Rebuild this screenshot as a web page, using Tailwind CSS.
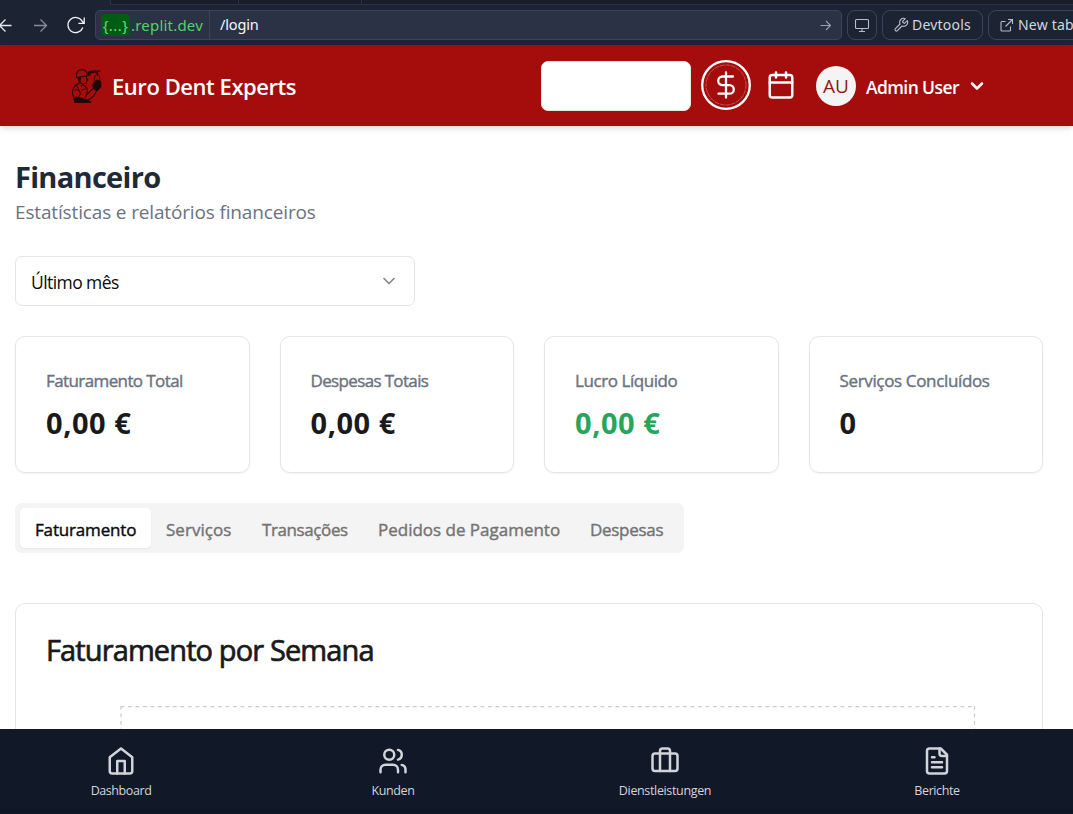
<!DOCTYPE html>
<html lang="pt">
<head>
<meta charset="utf-8">
<title>Euro Dent Experts</title>
<script src="https://cdn.jsdelivr.net/npm/@tailwindcss/browser@4"></script>
</head>
<body class="h-[814px] w-[1073px] overflow-hidden bg-white font-['Open_Sans','Noto_Sans',sans-serif]">
<div class="flex h-[814px] flex-col overflow-hidden">

  <!-- Browser toolbar -->
  <div class="flex h-[45px] shrink-0 flex-col bg-[#1c2333] font-['Noto_Sans',sans-serif]">
    <div class="ml-[110px] flex h-[5px] shrink-0 border-b border-l border-[#2b3245] bg-[#171d2b]">
      <div class="w-[128px] border-r border-[#2b3245]"></div>
      <div class="w-[123px] border-r border-[#2b3245]"></div>
    </div>
    <div class="mt-[5px] flex h-[30px] w-[1120px] items-center">
      <svg class="-ml-1 size-[18px]" viewBox="0 0 18 18" fill="none" stroke="#e5e8ee" stroke-width="1.3"><path d="M15.5 9.5H3M9.500 3.500 3.500 9.500l6 6"/></svg>
      <svg class="ml-[17px] size-[18px]" viewBox="0 0 18 18" fill="none" stroke="#878c99" stroke-width="1.300"><path d="M3 9.500h12.500M9.500 3.500l6 6-6 6"/></svg>
      <svg class="ml-[17px] size-[20px]" viewBox="0 0 20 20" fill="none" stroke="#f0f2f6" stroke-width="1.300"><path d="M16.800 12.500a7.600 7.600 0 1 1-.6-6.200L18 8.200M18.200 2.500v5.800h-5.800"/></svg>
      <div class="ml-[9px] flex h-[30px] w-[747px] items-center rounded-[5px] border border-[#3c445c] bg-[#2b3245]">
        <div class="ml-[5px] flex h-[22px] w-[29px] items-center justify-center rounded-[4px] bg-[#005c13] text-[15px] tracking-[0.400px] text-[#6cd97e]">{...}</div>
        <div class="ml-[1px] w-[78px] text-[15px] tracking-[0.200px] text-[#57d06c]">.replit.dev</div>
        <div class="h-[28px] w-px bg-[#3c445c]"></div>
        <div class="ml-[10px] grow text-[14.500px] tracking-[-0.150px] text-[#f5f9fc]">/login</div>
        <svg class="mr-[9px] size-[13px]" viewBox="0 0 13 13" fill="none" stroke="#9aa1b0" stroke-width="1.100"><path d="M1.500 6.500h10M7 2l4.500 4.500L7 11"/></svg>
      </div>
      <div class="ml-[5px] flex h-[30px] w-[30px] items-center justify-center rounded-[8px] border border-[#3c445c]">
        <svg class="size-[16px]" viewBox="0 0 16 16" fill="none" stroke="#b6bcc9" stroke-width="1.100"><rect x="1.500" y="2.500" width="13" height="9" rx="1"/><path d="M8 11.500v3M5 14.500h6"/></svg>
      </div>
      <div class="ml-[5px] flex h-[30px] w-[101px] items-center rounded-[8px] border border-[#3c445c]">
        <svg class="ml-[10px] size-[16px]" viewBox="0 0 24 24" fill="none" stroke="#b6bcc9" stroke-width="1.700" stroke-linejoin="round"><path d="M14.700 6.300a1 1 0 0 0 0 1.400l1.600 1.600a1 1 0 0 0 1.400 0l3.770-3.770a6 6 0 0 1-7.940 7.940l-6.910 6.910a2.120 2.120 0 0 1-3-3l6.910-6.910a6 6 0 0 1 7.940-7.940l-3.760 3.760z"/></svg>
        <span class="-mt-[2px] ml-[3px] text-[14px] tracking-[0.200px] text-[#d3d7df]">Devtools</span>
      </div>
      <div class="ml-[5px] flex h-[30px] w-[110px] items-center rounded-[8px] border border-[#3c445c]">
        <svg class="ml-[10px] size-[15px]" viewBox="0 0 15 15" fill="none" stroke="#b6bcc9" stroke-width="1.100"><path d="M6.500 3.500H3a1 1 0 0 0-1 1V12a1 1 0 0 0 1 1h7.500a1 1 0 0 0 1-1V8.500M9 1.500h4.500V6M13.500 1.500 6.500 8.500"/></svg>
        <span class="-mt-[2px] ml-[4px] whitespace-nowrap text-[14px] tracking-[0.200px] text-[#d3d7df]">New tab</span>
      </div>
    </div>
  </div>

  <!-- App header -->
  <header class="z-10 flex h-[81px] shrink-0 items-center bg-[#a50c0c] pl-[68px] shadow-md">
    <svg class="size-[36px]" viewBox="0 0 36 36" fill="none" stroke="#2a0707" stroke-width="1.100" stroke-linejoin="round" stroke-linecap="round">
      <path d="M8.500 9.500C7.500 5 10 2 13.500 1.800 17 1.700 19 3.500 19 6l3.500 1-3 .8L8.500 9.500"/>
      <path d="M11 9.500v4l2.500 2M18.500 8.500l.3 2.500 1 1-1 .7-.3 2.300-3 .7-2 2.300"/>
      <path d="M20.500 5l11-1.800M21.500 3.800l6-.6M28.500 4l1.200 2.500" stroke-width="1.800"/>
      <path d="M28.500 6.500c-3 2-2.500 5-1 8M30 6c2.500 3 2 6 1 8" stroke-width=".8"/>
      <path d="M11 15.500c-4 1.500-6.500 5-6.500 9.500L6 31M15 17c3 1 4.500 4 4.500 7l-2 5M19.500 26l6-6M18 32.500c5-1 9-5 11-11"/>
      <path d="M9 18l3.500 8-3 4M7 22c2-1 4 0 5 2M14 22l3-1" stroke-width=".9"/>
      <path d="M26 14.500l3-2.500 3.500 1.500.5 5-3.500 4-3.500-1.500-1.500-4z" fill="#1c0808"/>
      <path d="M5.500 29l6 .8 8 2.200 3.500 2.500H7z" fill="#1c0808"/>
      <path d="M10 10l2.500-.5-.5 4z" fill="#1c0808"/>
    </svg>
    <span class="mt-[2px] ml-[8px] w-[429px] whitespace-nowrap text-[22px] font-semibold tracking-[-0.450px] text-white">Euro Dent Experts</span>
    <div class="h-[50px] w-[150px] rounded-[7px] border border-[#e5e5e5] bg-white"></div>
    <svg class="-mt-[2px] ml-[10px] size-[50px]" viewBox="0 0 50 50" fill="none" stroke="#fff" stroke-linecap="round" stroke-linejoin="round">
      <circle cx="25" cy="25" r="23.800" stroke-width="2.300"/><circle cx="25" cy="25" r="20" stroke-width=".5" stroke="#dc9696" stroke-dasharray="4 1.500"/>
      <path d="M25 12.500v25M32 16.500h-10.500a4.300 4.300 0 0 0 0 8.600h7a4.300 4.300 0 0 1 0 8.600H17.500" stroke-width="2.300"/>
    </svg>
    <svg class="-mt-[2px] ml-[15px] size-[30px]" viewBox="0 0 24 24" fill="none" stroke="#fff" stroke-width="2" stroke-linecap="round" stroke-linejoin="round"><path d="M8 2v4M16 2v4M3 10h18"/><rect x="3" y="4" width="18" height="18" rx="2"/></svg>
    <div class="ml-[20px] flex size-[40px] items-center justify-center rounded-full bg-[#f4f4f5] pt-[2px] text-[19px] text-[#8f1a1a]">AU</div>
    <span class="ml-[10px] mt-[4px] w-[94px] whitespace-nowrap text-[17.500px] font-semibold tracking-[-0.600px] text-white">Admin User</span>
    <svg class="ml-[7px] size-[20px]" viewBox="0 0 24 24" fill="none" stroke="#fff" stroke-width="3" stroke-linecap="round" stroke-linejoin="round"><path d="m6 9 6 6 6-6"/></svg>
  </header>

  <!-- Finance page -->
  <main class="min-h-0 flex-1 overflow-hidden pl-[15px] pr-[30px] pt-[32px]">
    <h1 class="h-[38px] whitespace-nowrap text-[29px] leading-[37px] font-bold tracking-[-0.700px] text-[#1f2937]">Financeiro</h1>
    <p class="h-[30px] whitespace-nowrap text-[19px] leading-[32px] tracking-[-0.150px] text-[#6b7280]">Estatísticas e relatórios financeiros</p>
    <div class="mt-[30px] flex h-[50px] w-[400px] items-center justify-between rounded-[7px] border border-[#e5e5e5] pl-[15px] pr-[15px]">
      <span class="mt-[3px] text-[17.500px] tracking-[-0.570px] text-[#0a0a0a]">Último mês</span>
      <svg class="size-[20px]" viewBox="0 0 24 24" fill="none" stroke="#858585" stroke-width="2" stroke-linecap="round" stroke-linejoin="round"><path d="m6 9 6 6 6-6"/></svg>
    </div>

    <section class="mt-[30px] grid h-[137px] grid-cols-4 gap-[30px]">
      <div class="rounded-[10px] border border-[#e5e5e5] px-[30px] pt-[31px] shadow-xs">
        <p class="h-[25px] whitespace-nowrap text-[17px] leading-[25px] tracking-[-0.600px] text-[#6b7280] [-webkit-text-stroke:0.4px]">Faturamento Total</p>
        <p class="mt-[11px] whitespace-nowrap text-[29px] leading-[37px] font-bold tracking-[0.550px] text-[#1a1a1a]">0,00 €</p>
      </div>
      <div class="rounded-[10px] border border-[#e5e5e5] px-[30px] pt-[31px] shadow-xs">
        <p class="h-[25px] whitespace-nowrap text-[17px] leading-[25px] tracking-[-0.650px] text-[#6b7280] [-webkit-text-stroke:0.4px]">Despesas Totais</p>
        <p class="mt-[11px] whitespace-nowrap text-[29px] leading-[37px] font-bold tracking-[0.550px] text-[#1a1a1a]">0,00 €</p>
      </div>
      <div class="rounded-[10px] border border-[#e5e5e5] px-[30px] pt-[31px] shadow-xs">
        <p class="h-[25px] whitespace-nowrap text-[17px] leading-[25px] tracking-[-0.430px] text-[#6b7280] [-webkit-text-stroke:0.4px]">Lucro Líquido</p>
        <p class="mt-[11px] whitespace-nowrap text-[29px] leading-[37px] font-bold tracking-[0.550px] text-[#27a55a]">0,00 €</p>
      </div>
      <div class="rounded-[10px] border border-[#e5e5e5] px-[30px] pt-[31px] shadow-xs">
        <p class="h-[25px] whitespace-nowrap text-[17px] leading-[25px] tracking-[-0.350px] text-[#6b7280] [-webkit-text-stroke:0.4px]">Serviços Concluídos</p>
        <p class="mt-[11px] whitespace-nowrap text-[29px] leading-[37px] font-bold tracking-[0.550px] text-[#1a1a1a]">0</p>
      </div>
    </section>

    <nav class="mt-[30px] flex h-[50px] w-[669px] items-center rounded-[7px] bg-[#f4f4f4] px-[5px] text-[17px] whitespace-nowrap text-[#737373] [-webkit-text-stroke:0.4px]">
      <div class="flex h-[40px] w-[131px] items-center rounded-[5px] bg-white pt-[3px] pl-[15px] tracking-[-0.170px] text-[#0a0a0a] shadow-xs">Faturamento</div>
      <div class="w-[96px] pt-[3px] pl-[15px] tracking-[0.050px]">Serviços</div>
      <div class="w-[116px] pt-[3px] pl-[15px] tracking-[-0.400px]">Transações</div>
      <div class="w-[212px] pt-[3px] pl-[15px] tracking-[-0.010px]">Pedidos de Pagamento</div>
      <div class="pt-[3px] pl-[15px] tracking-[-0.300px]">Despesas</div>
    </nav>

    <section class="mt-[50px] h-[300px] rounded-[10px] border border-[#e5e5e5] pt-[28px] pl-[30px]">
      <h2 class="h-[36px] whitespace-nowrap text-[29px] leading-[36px] tracking-[-0.880px] text-[#1a1a1a] [-webkit-text-stroke:0.7px]">Faturamento por Semana</h2>
      <svg class="mt-[37px] ml-[74px] h-[200px] w-[856px]" viewBox="0 0 856 200" fill="none" stroke="#ccc" stroke-dasharray="3.750 3.750" stroke-width="1.250"><path d="M.5 1.500H855M1 1V200M854.500 1V200"/></svg>
    </section>
  </main>

  <!-- Bottom navigation -->
  <footer class="z-10 grid h-[85px] w-[1088px] shrink-0 grid-cols-4 bg-[#111827] text-[12.500px] text-[#d1d5db] shadow-[inset_0_-5px_0_#0e1525]">
    <div class="-ml-[30px] flex flex-col items-center pt-[17px]">
      <svg class="size-[30px]" viewBox="0 0 24 24" fill="none" stroke="currentColor" stroke-width="2" stroke-linecap="round" stroke-linejoin="round"><path d="m3 9 9-7 9 7v11a2 2 0 0 1-2 2H5a2 2 0 0 1-2-2z"/><path d="M9 22V12h6v10"/></svg>
      <span class="mt-[6px] tracking-[-0.420px]">Dashboard</span>
    </div>
    <div class="-ml-[30px] flex flex-col items-center pt-[17px]">
      <svg class="size-[30px]" viewBox="0 0 24 24" fill="none" stroke="currentColor" stroke-width="2" stroke-linecap="round" stroke-linejoin="round"><path d="M16 21v-2a4 4 0 0 0-4-4H6a4 4 0 0 0-4 4v2"/><circle cx="9" cy="7" r="4"/><path d="M22 21v-2a4 4 0 0 0-3-3.870M16 3.130a4 4 0 0 1 0 7.750"/></svg>
      <span class="mt-[6px] tracking-[-0.350px]">Kunden</span>
    </div>
    <div class="-ml-[30px] flex flex-col items-center pt-[17px]">
      <svg class="size-[30px]" viewBox="0 0 24 24" fill="none" stroke="currentColor" stroke-width="2" stroke-linecap="round" stroke-linejoin="round"><path d="M16 20V4a2 2 0 0 0-2-2h-4a2 2 0 0 0-2 2v16"/><rect x="2" y="6" width="20" height="14" rx="2"/></svg>
      <span class="mt-[6px] tracking-[-0.350px]">Dienstleistungen</span>
    </div>
    <div class="-ml-[30px] flex flex-col items-center pt-[17px]">
      <svg class="size-[30px]" viewBox="0 0 24 24" fill="none" stroke="currentColor" stroke-width="2" stroke-linecap="round" stroke-linejoin="round"><path d="M15 2H6a2 2 0 0 0-2 2v16a2 2 0 0 0 2 2h12a2 2 0 0 0 2-2V7Z"/><path d="M14 2v4a2 2 0 0 0 2 2h4M10 9H8M16 13H8M16 17H8"/></svg>
      <span class="mt-[6px] tracking-[-0.400px]">Berichte</span>
    </div>
  </footer>
</div>
</body>
</html>
